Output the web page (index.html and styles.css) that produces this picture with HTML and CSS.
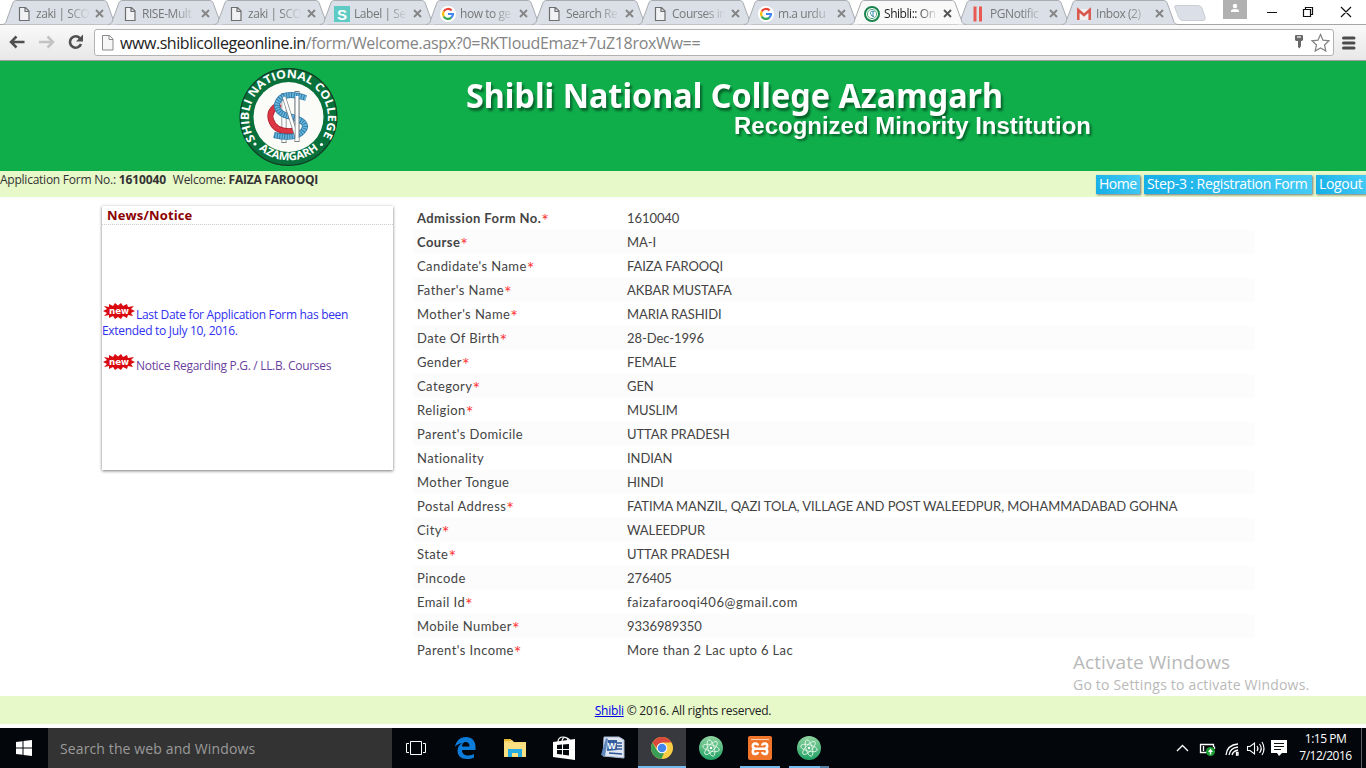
FILE: index.html
```html
<!DOCTYPE html>
<html lang="en">
<head>
<meta charset="utf-8">
<title>Shibli:: Online</title>
<link rel="stylesheet" href="styles.css">
</head>
<body>
<svg class="defs" width="0" height="0">
  <defs>
    <symbol id="tab" viewBox="0 0 116 25"><path d="M0 24.5C4 24 4 22 5 19L10.500 4C11.500 1 12.500.5 15 .5H101C103.500.5 104.500 1 105.500 4L111 19C112 22 112 24 116 24.500"/></symbol>
    <symbol id="doc" viewBox="0 0 16 16"><path d="M3.500 1.500H9.500L13 5V14.500H3.500ZM9 1.500V5.500H13" fill="#f1f2f4" stroke="#6e6e6e" stroke-width="1.200"/></symbol>
    <symbol id="google" viewBox="0 0 16 16"><circle cx="8" cy="8" r="8" fill="#fff"/><g fill="none" stroke-width="2.200"><path d="M11.600 4.400A5 5 0 0 0 3.700 5.500" stroke="#ea4335"/><path d="M3.700 5.500A5 5 0 0 0 3.700 10.500" stroke="#fbbc05"/><path d="M3.700 10.500A5 5 0 0 0 11.300 11.700" stroke="#34a853"/><path d="M8 8H13A5 5 0 0 1 11.300 11.700" stroke="#4285f4"/></g></symbol>
    <symbol id="close" viewBox="0 0 9 9"><path d="M1 1 8 8M8 1 1 8" stroke="currentColor" stroke-width="1.900"/></symbol>
    <symbol id="atom" viewBox="0 0 24 24"><circle cx="12" cy="12" r="12" fill="url(#ag)"/><g fill="none" stroke="#dff5e6" stroke-width=".9"><ellipse cx="12" cy="12" rx="8.500" ry="3.200" transform="rotate(14 12 12)"/><ellipse cx="12" cy="12" rx="8.500" ry="3.200" transform="rotate(74 12 12)"/><ellipse cx="12" cy="12" rx="8.500" ry="3.200" transform="rotate(134 12 12)"/></g><circle cx="12" cy="12" r="1.300" fill="#fff"/></symbol>
    <linearGradient id="ag" x2="0" y2="1"><stop stop-color="#8fd3a0"/><stop offset="1" stop-color="#1fa163"/></linearGradient>
    <symbol id="new" viewBox="0 0 32 17"><path d="M1 3 6 4 6 1 10 3 12 0 15 2.500 18 0 20 3 24 1 25 4 31 3 28 6 32 8 28 10 30 13 25 12 24 15 20 13 18 16 15 14 12 16 10 13 6 15 6 12 1 13 4 10 0 8 4 6Z" fill="#d90b10"/><text x="6" y="10.500" textLength="20" lengthAdjust="spacingAndGlyphs" class="new-text">new</text></symbol>
  </defs>
</svg>

<div class="tabstrip">
  <div class="tab"><svg class="shape"><use href="#tab"/></svg><svg class="fav"><use href="#doc"/></svg><span class="label">zaki | SCO</span><svg class="x"><use href="#close"/></svg></div>
  <div class="tab"><svg class="shape"><use href="#tab"/></svg><svg class="fav"><use href="#doc"/></svg><span class="label">RISE-Mult</span><svg class="x"><use href="#close"/></svg></div>
  <div class="tab"><svg class="shape"><use href="#tab"/></svg><svg class="fav"><use href="#doc"/></svg><span class="label">zaki | SCO</span><svg class="x"><use href="#close"/></svg></div>
  <div class="tab"><svg class="shape"><use href="#tab"/></svg><svg class="fav" viewBox="0 0 16 16"><rect width="16" height="16" fill="#5ecbc4"/><text x="3" y="13.500" class="fav-s">S</text></svg><span class="label">Label | Se</span><svg class="x"><use href="#close"/></svg></div>
  <div class="tab"><svg class="shape"><use href="#tab"/></svg><svg class="fav"><use href="#google"/></svg><span class="label">how to ge</span><svg class="x"><use href="#close"/></svg></div>
  <div class="tab"><svg class="shape"><use href="#tab"/></svg><svg class="fav"><use href="#doc"/></svg><span class="label">Search Re</span><svg class="x"><use href="#close"/></svg></div>
  <div class="tab"><svg class="shape"><use href="#tab"/></svg><svg class="fav"><use href="#doc"/></svg><span class="label">Courses in</span><svg class="x"><use href="#close"/></svg></div>
  <div class="tab"><svg class="shape"><use href="#tab"/></svg><svg class="fav"><use href="#google"/></svg><span class="label">m.a urdu</span><svg class="x"><use href="#close"/></svg></div>
  <div class="tab active"><svg class="shape"><use href="#tab"/></svg><svg class="fav" viewBox="0 0 16 16"><circle cx="8" cy="8" r="7" fill="#fff" stroke="#18844d" stroke-width="2"/><circle cx="8" cy="8" r="4.600" fill="none" stroke="#5aaa80" stroke-width="1"/><path d="M10.500 5.500Q6 4.500 6.500 7.500T10 10.500M9 5V11" stroke="#3b8fb0" fill="none"/></svg><span class="label">Shibli:: On</span><svg class="x"><use href="#close"/></svg></div>
  <div class="tab"><svg class="shape"><use href="#tab"/></svg><svg class="fav" viewBox="0 0 16 16"><path d="M5 .5V15.500M10.500 .5V15.500" stroke="#ea5a52" stroke-width="3"/></svg><span class="label">PGNotific</span><svg class="x"><use href="#close"/></svg></div>
  <div class="tab"><svg class="shape"><use href="#tab"/></svg><svg class="fav" viewBox="0 0 16 16"><path d="M1 3H15V14H1Z" fill="#f1eeee"/><path d="M2.300 14V4L8 9 13.700 4V14" fill="none" stroke="#d9564b" stroke-width="2.500"/></svg><span class="label">Inbox (2)</span><svg class="x"><use href="#close"/></svg></div>
  <svg class="newtab" viewBox="0 0 32 16"><path d="M2 .5H24Q27 .5 28 3L31 12Q32 15.500 29 15.500H9Q6 15.500 5 13L1 3Q0 .5 2 .5Z" fill="#dbe0e8" stroke="#c8cdd4"/></svg>
  <div class="winctl">
    <svg class="user" viewBox="0 0 24 19"><rect width="24" height="19" fill="#b1b1b1"/><circle cx="12" cy="6" r="2.200" fill="#fff"/><path d="M8 12V11Q8 9 12 9T16 11V12Z" fill="#fff"/></svg>
    <svg class="ctl" viewBox="0 0 100 24"><path d="M1 12.500H11M37.500 9.500H44.500V16.500H37.500ZM39.500 9.500V7.500H46.500V14.500H44.500M75 7 85 17M85 7 75 17" fill="none" stroke="#111" stroke-width="1.200"/></svg>
  </div>
</div>

<div class="toolbar">
  <svg class="nav" viewBox="0 0 90 24"><g fill="none" stroke-width="2.500"><path d="M25.500 12H12M17.500 6.500 12 12 17.500 17.500" stroke="#505050"/><path d="M40 12H53.500M48.500 6.500 54 12 48.500 17.500" stroke="#c3c3c3"/><path d="M81 8.300A5.700 5.700 0 1 0 82 14" stroke="#505050" stroke-width="2.600"/></g><path d="M84 4.500V11.500H77Z" fill="#505050"/></svg>
  <div class="omnibox">
    <svg class="urlicon" viewBox="0 0 16 16"><path d="M2.500 .5H9.500L13 4V15H2.500ZM9 .5V4.500H13" fill="#f7f7f7" stroke="#8b8b8b"/></svg>
    <span class="url"><b>www.shiblicollegeonline.in</b>/form/Welcome.aspx?0=RKTIoudEmaz+7uZ18roxWw==</span>
    <svg class="boxicons" viewBox="0 0 40 22"><path d="M1 3Q1 2 2 2H8Q9 2 9 3V7L8 8H7V13L5.500 15.500 4 14V8H2L1 7Z" fill="#686868"/><path d="M3 4H7" stroke="#fff" stroke-width="1.200"/><path d="M26.500 1.500 29 7.200 35 7.800 30.500 12 31.800 18 26.500 15 21.200 18 22.500 12 18 7.800 24 7.200Z" fill="#fff" stroke="#818181" stroke-width="1.200"/></svg>
  </div>
  <svg class="menu" viewBox="0 0 14 14"><path d="M1.500 2H12M1.500 7H12M1.500 12H12" stroke="#4c4c4c" stroke-width="3" stroke-linecap="round"/></svg>
</div>

<header class="banner">
  <svg viewBox="0 61 1366 110" width="1366" height="110">
    <defs>
      <path id="arcTop" d="M255.500 139.500A39.500 39.500 0 1 1 322.500 137.500"/>
      <path id="arcBottom" d="M248 135A45 45 0 0 0 329 135"/>
    </defs>
    <circle cx="288.500" cy="117" r="49" fill="#08713b"/>
    <circle cx="288.500" cy="117" r="48.300" fill="none" stroke="#153e25" stroke-width="1.200"/>
    <circle cx="288.500" cy="117" r="35" fill="#fbfcf8"/>
    <text class="seal"><textPath href="#arcTop" textLength="167" lengthAdjust="spacingAndGlyphs">SHIBLI NATIONAL COLLEGE</textPath></text>
    <text class="seal small"><textPath href="#arcBottom" startOffset="18" textLength="65" lengthAdjust="spacingAndGlyphs">AZAMGARH</textPath></text>
    <circle cx="255" cy="144" r="1.600" fill="#fff"/><circle cx="321.500" cy="144.500" r="1.600" fill="#fff"/>
    <g fill="none">
      <path d="M284 93V143M297 91V142" stroke="#777d80" stroke-width="5"/><path d="M284 94V142M297 92V141" stroke="#fff" stroke-width="3.500"/>
      <path d="M280 104Q268 110 271 120Q276 135 299 130" stroke="#a81e2b" stroke-width="6"/><path d="M280 104Q268 110 271 120Q276 135 299 130" stroke="#dc3645" stroke-width="4.500"/>
      <path d="M306 98Q281 90 277 104Q276 114 292 117Q310 122 303 131Q296 140 274 135" stroke="#337ba8" stroke-width="6"/><path d="M306 98Q281 90 277 104Q276 114 292 117Q310 122 303 131Q296 140 274 135" stroke="#69b9df" stroke-width="4.500" stroke-dasharray="1.500 1"/>
      <path d="M284 97 297 138" stroke="#777d80" stroke-width="4"/><path d="M284 97 297 138" stroke="#fff" stroke-width="2.500"/>
      <path d="M297 97V138" stroke="#777d80" stroke-width="4.500"/><path d="M297 96V139" stroke="#fff" stroke-width="3"/>
    </g>
    <text x="466" y="107.500" textLength="537" lengthAdjust="spacingAndGlyphs" class="title">Shibli National College Azamgarh</text>
    <text x="734" y="134" textLength="357" lengthAdjust="spacingAndGlyphs" class="subtitle">Recognized Minority Institution</text>
  </svg>
</header>

<div class="userbar">
  <p class="who">Application Form No.: <b class="num">1610040</b>&nbsp; Welcome: <b>FAIZA FAROOQI</b></p>
  <nav class="links"><a class="home">Home</a><a class="step">Step-3 : Registration Form</a><a class="logout">Logout</a></nav>
</div>

<main class="content">
  <section class="news">
    <h2>News/Notice</h2>
    <div class="items">
      <p class="blue"><svg class="new"><use href="#new"/></svg>Last Date for Application Form has been<br>Extended to July 10, 2016.</p>
      <p class="purple"><svg class="new"><use href="#new"/></svg>Notice Regarding P.G. / LL.B. Courses</p>
    </div>
  </section>
  <dl class="details">
    <div><dt><b>Admission Form No.</b><i>*</i></dt><dd>1610040</dd></div>
    <div><dt><b>Course</b><i>*</i></dt><dd>MA-I</dd></div>
    <div><dt>Candidate's Name<i>*</i></dt><dd>FAIZA FAROOQI</dd></div>
    <div><dt>Father's Name<i>*</i></dt><dd>AKBAR MUSTAFA</dd></div>
    <div><dt>Mother's Name<i>*</i></dt><dd>MARIA RASHIDI</dd></div>
    <div><dt>Date Of Birth<i>*</i></dt><dd>28-Dec-1996</dd></div>
    <div><dt>Gender<i>*</i></dt><dd>FEMALE</dd></div>
    <div><dt>Category<i>*</i></dt><dd>GEN</dd></div>
    <div><dt>Religion<i>*</i></dt><dd>MUSLIM</dd></div>
    <div><dt>Parent's Domicile</dt><dd>UTTAR PRADESH</dd></div>
    <div><dt>Nationality</dt><dd>INDIAN</dd></div>
    <div><dt>Mother Tongue</dt><dd>HINDI</dd></div>
    <div><dt>Postal Address<i>*</i></dt><dd>FATIMA MANZIL, QAZI TOLA, VILLAGE AND POST WALEEDPUR, MOHAMMADABAD GOHNA</dd></div>
    <div><dt>City<i>*</i></dt><dd>WALEEDPUR</dd></div>
    <div><dt>State<i>*</i></dt><dd>UTTAR PRADESH</dd></div>
    <div><dt>Pincode</dt><dd>276405</dd></div>
    <div><dt>Email Id<i>*</i></dt><dd class="email">faizafarooqi406@gmail.com</dd></div>
    <div><dt>Mobile Number<i>*</i></dt><dd>9336989350</dd></div>
    <div><dt>Parent's Income<i>*</i></dt><dd class="mixed">More than 2 Lac upto 6 Lac</dd></div>
  </dl>
  <div class="watermark"><p class="w1">Activate Windows</p><p class="w2">Go to Settings to activate Windows.</p></div>
</main>

<footer class="footer"><p><a>Shibli</a> © 2016. All rights reserved.</p></footer>

<div class="taskbar">
  <div class="cell"><svg width="16" height="16" viewBox="0 0 16 16"><path d="M0 2 6.500 1.200V7.500H0ZM7.500 1 16 0V7.500H7.500ZM0 8.500H6.500V14.800L0 14ZM7.500 8.500H16V16L7.500 15Z" fill="#fff"/></svg></div>
  <div class="search"><span>Search the web and Windows</span></div>
  <div class="cell view"><svg width="20" height="14" viewBox="0 0 20 14"><path d="M4.500.5H15.500V13.500H4.500ZM3 2.500H.5V11.500H3M17 2.500H19.500V11.500H17" fill="none" stroke="#fff"/></svg></div>
  <div class="cell edge"><svg width="21" height="22" viewBox="0 0 21 22"><path d="M0 10C1 4 5 0 11 0C17 0 20.500 4 20.500 10V13H7C7 17 10 18.500 13 18.500C16 18.500 18 17.500 19 17V20.500C17 21.500 14.500 22 12 22C6 22 2.500 18.500 2.500 13.500C2.500 10 4.500 7.500 7.500 6C4 6.500 1.500 8 0 10ZM7 9.500H14.500C14.500 6.500 13 5 10.800 5C8.500 5 7.200 7 7 9.500Z" fill="#0c7cdb"/></svg></div>
  <div class="cell"><svg width="22" height="20" viewBox="0 0 22 20"><path d="M0 2H8L10 4H22V19H0Z" fill="#f8d775"/><path d="M0 1H7V3H0Z" fill="#e8b52e"/><path d="M0 5H22V18H0Z" fill="#fbdf83"/><path d="M4 11H18V19H14V15H8V19H4Z" fill="#26ace2"/></svg></div>
  <div class="cell"><svg width="22" height="24" viewBox="0 0 22 24"><path d="M0 6 22 3V24L0 21Z" fill="#fff"/><path d="M5 6Q5 1 10 1T15 5M9 5Q10 0 14 2T16 5" fill="none" stroke="#fff" stroke-width="1.200"/><path d="M4 9 9 8.500V13H4ZM10 8.400 16 8V13H10ZM4 14H9V18.500L4 18ZM10 14H16V19.500L10 18.700Z" fill="#05080c"/></svg></div>
  <div class="cell"><svg width="24" height="24" viewBox="0 0 24 24"><path d="M3 1H18L23 4V22L2 20Z" fill="#dfe6f0" stroke="#a9bad4"/><path d="M15 7H21M15 10H21M15 13H21M8 17 21 18" stroke="#2c5597" stroke-width="1.400"/><path d="M5 2 0 19 4 20 7 3Z" fill="#5f86bd"/><path d="M7 4H16V14L6 15Z" fill="#345f9f"/><text x="6.500" y="13" class="word">W</text></svg></div>
  <div class="cell chrome"><svg width="22" height="22" viewBox="0 0 22 22"><circle cx="11" cy="11" r="11" fill="#f9ce45"/><path d="M11 11H15L10.500 22A11 11 0 0 1 1.500 5.500L6 13.500Z" fill="#3b9e56"/><path d="M1.500 5.500A11 11 0 0 1 20.500 5.500H11L6.500 12Z" fill="#d94a3d"/><circle cx="11" cy="11" r="5.300" fill="#fff"/><circle cx="11" cy="11" r="4.300" fill="#4385ed"/></svg></div>
  <div class="cell"><svg width="24" height="24"><use href="#atom"/></svg></div>
  <div class="cell open"><svg width="24" height="24" viewBox="0 0 24 24"><rect width="24" height="24" rx="2" fill="#f0742a"/><path d="M3 3.500H21" stroke="#fbd0b0" stroke-width="1"/><path d="M7 12.700H17M10 9.500Q9.500 7.500 7.300 7.500Q4.800 7.500 4.800 10Q4.800 12.700 7.500 12.700Q4.800 12.700 4.800 15.400Q4.800 18 7.300 18Q9.500 18 10 16M14 9.500Q14.500 7.500 16.700 7.500Q19.200 7.500 19.200 10Q19.200 12.700 16.500 12.700Q19.200 12.700 19.200 15.400Q19.200 18 16.700 18Q14.500 18 14 16" fill="none" stroke="#fff" stroke-width="2.600"/></svg></div>
  <div class="cell open two"><svg width="24" height="24"><use href="#atom"/></svg></div>
  <div class="tray">
    <svg width="116" height="40" viewBox="0 0 116 40"><g fill="none" stroke="#fff" stroke-width="1.300"><path d="M1 23 6.500 17.500 12 23"/><path d="M32 24.500H24.500V16.500H37.500V19M27.500 18V23M38.500 18.500V21"/><path d="M50 27Q51 17 62 16M53 27Q54 20 62 19M56 27Q57 23 62 22"/><path d="M60.500 27V24.500H62V27Z"/><path d="M71.500 18.500H74L78.500 15V26L74 22.500H71.500ZM81 18Q83 20.500 81 23M83.500 16Q87 20.500 83.500 25M86 14Q90 20.500 86 27" stroke-width="1.100"/></g><circle cx="34.500" cy="23.500" r="4.500" fill="#1b9f35"/><path d="M34.500 20.500 37 24H35.200V26.500H33.800V24H32Z" fill="#fff"/><path d="M95 12H111V25H106L103 28 101 25H95Z" fill="#fff"/><path d="M98 15.500H108M98 18.500H108M98 21.500H105" stroke="#111"/></svg>
    <div class="clock"><p>1:15 PM</p><p class="date">7/12/2016</p></div>
    <div class="desk"></div>
  </div>
</div>
</body>
</html>
```
FILE: styles.css
```css
* { box-sizing: border-box; }
body { margin: 0; width: 1366px; height: 768px; overflow: hidden; background: #fff; display: flex; flex-direction: column; font-family: "Open Sans", sans-serif; font-size: 12px; color: #333; }
p, h2, dl, dd { margin: 0; }
svg { display: block; flex: none; }
.defs { position: absolute; }

.tabstrip { height: 25px; display: flex; padding-left: 2px; flex: none; background: linear-gradient(#fff 24px, #a5a5a5 24px); }
.tab { position: relative; width: 116px; height: 25px; margin-right: -10px; padding-left: 14px; display: flex; align-items: center; flex: none; color: #777; }
.shape { position: absolute; left: 0; top: 0; width: 116px; height: 25px; fill: #dbe0e8; stroke: #a8abb0; }
.fav { position: relative; width: 16px; height: 16px; margin-top: 2px; }
.label { position: relative; width: 54px; margin-left: 4px; height: 20px; line-height: 21px; margin-top: 1px; overflow: hidden; white-space: nowrap; letter-spacing: -.45px; -webkit-mask-image: linear-gradient(90deg, #000 60%, transparent 100%); mask-image: linear-gradient(90deg, #000 60%, transparent 100%); }
.x { position: relative; width: 9px; height: 9px; margin: 2px 0 0 5px; color: #858585; }
.active { z-index: 2; color: #222; }
.active .shape { fill: #f9f9f9; }
.active .x { color: #555; }
.fav-s { font: bold 15px "Liberation Sans", sans-serif; fill: #fff; }
.newtab { width: 32px; height: 16px; margin: 5px 0 0 6px; }
.winctl { display: flex; margin-left: auto; }
.user { width: 24px; height: 19px; margin-right: 19px; }
.ctl { width: 100px; height: 24px; }

.toolbar { height: 36px; flex: none; display: flex; background: linear-gradient(#f9f9f9, #e8e8e8); border-bottom: 1px solid #9b9b9b; padding-top: 4px; }
.nav { width: 90px; height: 24px; margin: 1px 4px 0 -1px; }
.omnibox { width: 1240px; height: 27px; border: 1px solid #b2b2b2; border-radius: 3px; background: #fff; display: flex; align-items: center; margin-left: 1px; padding-left: 5px; }
.urlicon { width: 16px; height: 16px; }
.url { font-size: 16px; margin-left: 4px; color: #848484; white-space: nowrap; letter-spacing: -.32px; line-height: 24px; }
.url b { font-weight: 400; color: #222; letter-spacing: -.44px; }
.boxicons { width: 40px; height: 22px; margin: 2px -1px 0 auto; }
.menu { width: 14px; height: 14px; margin: 7px 0 0 8px; }

.banner { height: 110px; flex: none; background: #0fae4b; }
.seal { font: bold 11.500px "Open Sans", sans-serif; fill: #fff; }
.small { font-size: 11px; }
.title { font: bold 34.500px "Noto Sans", sans-serif; fill: #fff; filter: drop-shadow(2px 3px 1px rgba(0, 50, 20, .6)); }
.subtitle { font: bold 23.500px "Liberation Sans", sans-serif; fill: #fff; filter: drop-shadow(2px 2px 1px rgba(0, 50, 20, .6)); }

.userbar { height: 26px; flex: none; display: flex; justify-content: space-between; background: #e7f8c9; }
.who { line-height: 18px; font-size: 12px; letter-spacing: -.24px; white-space: nowrap; }
.num { margin-right: 1px; letter-spacing: -.1px; }
.links { display: flex; gap: 4px; padding-top: 4px; }
.links a { height: 19px; line-height: 18px; padding-left: 3px; font-size: 14px; color: #fff; white-space: nowrap; overflow: hidden; background: linear-gradient(60deg, #14aee6, #47ccf6); box-shadow: 1px 1px 2px #777; letter-spacing: -.33px; }
.links .home { width: 44px; letter-spacing: -.5px; }
.step { width: 168px; }
.logout { width: 50px; }

.content { position: relative; height: 499px; flex: none; display: flex; padding: 9px 0 0 102px; }
.news { width: 291px; height: 264px; box-shadow: 0 1px 3px #777; background: #fff; }
.news h2 { height: 19px; line-height: 19px; padding-left: 5px; font-size: 13px; color: #8b0000; border-bottom: 1px dotted #ccc; letter-spacing: .15px; }
.items { padding-top: 78px; font-size: 12px; line-height: 16px; letter-spacing: -.31px; white-space: nowrap; }
.new { display: inline-block; width: 32px; height: 17px; margin: 0 1px 0 1px; vertical-align: -1px; }
.new-text { font: bold 9px "DejaVu Sans", sans-serif; fill: #fff; letter-spacing: 0; }
.blue { color: #3030f0; }
.purple { color: #6b3fa0; margin-top: 15px; }
.details { width: 842px; height: 458px; margin-left: 20px; font: 13px/25px Lato, "Noto Sans", sans-serif; color: #444; }
.details div { display: flex; height: 24px; padding-left: 4px; }
.details div:nth-child(even) { background: #fcfcfc; }
.details dt { width: 210px; letter-spacing: .42px; }
.details b { letter-spacing: .42px; }
.details i { color: #f33; font-style: normal; font-size: 18px; line-height: 0; vertical-align: -4px; letter-spacing: 0; }
.details dd { white-space: nowrap; letter-spacing: -.07px; }
.details .mixed { letter-spacing: .37px; }
.details .email { letter-spacing: .53px; }
.watermark { position: absolute; left: 1073px; top: 453px; color: #b9b9b9; white-space: nowrap; }
.w1 { font-size: 19px; line-height: 24px; letter-spacing: .07px; }
.w2 { font-size: 14px; line-height: 22px; letter-spacing: .2px; }

.footer { height: 28px; margin-bottom: 4px; flex: none; background: #e7f8c9; text-align: center; line-height: 29px; letter-spacing: -.22px; color: #222; }
.footer a { color: #0000e8; text-decoration: underline; }

.taskbar { height: 40px; flex: none; display: flex; background: #03060b; color: #fff; }
.cell { width: 49px; height: 40px; display: flex; align-items: center; justify-content: center; flex: none; }
.cell:first-child { width: 48px; }
.view { padding-right: 1px; }
.search { width: 344px; background: #333; padding-left: 12px; font-size: 14px; line-height: 41px; color: #9a9a9a; letter-spacing: .12px; flex: none; }
.chrome { background: #37393e; border-bottom: 2px solid #76b9ed; padding-top: 2px; width: 48px; margin-left: 1px; }
.open { background: linear-gradient(#76b9ed, #76b9ed) 5px 38px / 40px 2px no-repeat; }
.two { background: linear-gradient(90deg, #76b9ed 31px, #557fa5 31px) 5px 38px / 40px 2px no-repeat; }
.word { font: bold 9px "Liberation Sans", sans-serif; fill: #fff; }
.tray { margin-left: auto; display: flex; }
.clock { width: 73px; padding: 2px 6px 0 0; text-align: center; font-size: 12px; line-height: 17px; letter-spacing: -.5px; }
.desk { width: 5px; border-left: 1px solid #5b5e62; margin-left: -4px; }
```
